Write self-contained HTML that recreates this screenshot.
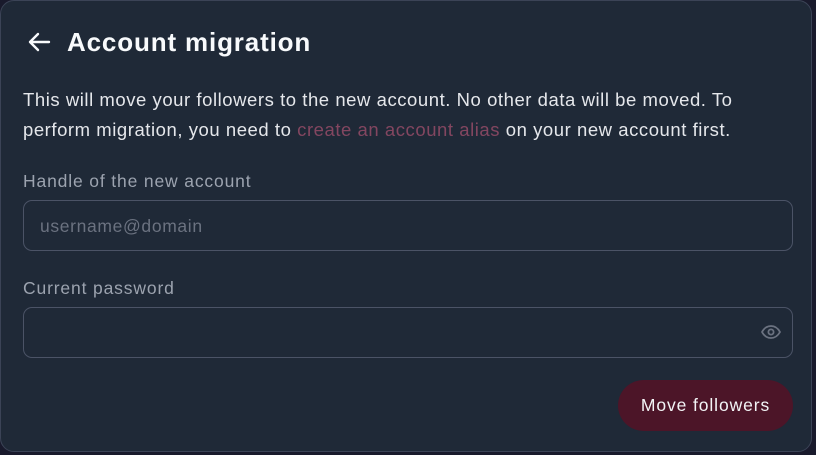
<!DOCTYPE html>
<html><head><style>
html,body{margin:0;padding:0;width:816px;height:455px;background:#191a2c;overflow:hidden;font-family:"Liberation Sans",sans-serif;}
.card{position:absolute;left:0;top:0;width:812px;height:452px;background:#1f2937;border:1px solid #3b4356;border-radius:14px;box-sizing:border-box;}
h1{position:absolute;left:66px;top:26px;margin:0;font-size:26px;font-weight:bold;color:#f8fafc;letter-spacing:0.85px}
.back{position:absolute;left:26px;top:30px}
p{position:absolute;left:22px;top:84px;margin:0;width:780px;font-size:18.5px;line-height:30px;color:#e5e7eb;letter-spacing:0.55px}
a{color:#834660;text-decoration:none}
.lbl{position:absolute;left:22px;font-size:17.5px;color:#9ca3af;letter-spacing:0.85px}
.inp{position:absolute;left:22px;width:770px;height:51px;border:1px solid #4b5366;border-radius:9px;box-sizing:border-box;font-size:17.5px;color:#6b7280;padding:15px 16px;letter-spacing:0.65px}
.btn{position:absolute;left:617px;top:379px;width:175px;height:51px;border-radius:26px;background:#4c1528;color:#f3f4f6;font-size:17.5px;text-align:center;line-height:51px;letter-spacing:0.9px}
</style></head><body>
<div class="card">
<svg class="back" width="24" height="22" viewBox="0 0 24 22"><path d="M22 11H3M11 3L3 11L11 19" stroke="#f8fafc" stroke-width="2.4" fill="none" stroke-linecap="round" stroke-linejoin="round"/></svg>
<h1>Account migration</h1>
<p>This will move your followers to the new account. No other data will be moved. To perform migration, you need to <a>create an account alias</a> on your new account first.</p>
<div class="lbl" style="top:170px">Handle of the new account</div>
<div class="inp" style="top:199px">username@domain</div>
<div class="lbl" style="top:277px">Current password</div>
<div class="inp" style="top:306px"></div>
<svg style="position:absolute;left:759px;top:322px" width="22" height="18" viewBox="0 0 22 18"><path d="M2 9C4.5 4.5 7.5 3 11 3S17.5 4.5 20 9C17.5 13.5 14.5 15 11 15S4.5 13.5 2 9Z" stroke="#6b7280" stroke-width="1.8" fill="none"/><circle cx="11" cy="9" r="2.6" stroke="#6b7280" stroke-width="1.8" fill="none"/></svg>
<div class="btn">Move followers</div>
</div>
</body></html>
